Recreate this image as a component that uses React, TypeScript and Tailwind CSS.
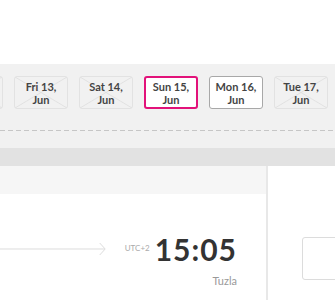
import React from "react";

type Day = { label: string; state: "off" | "on" | "active" };

const days: Day[] = [
  { label: "Fri 13,", state: "off" },
  { label: "Sat 14,", state: "off" },
  { label: "Sun 15,", state: "active" },
  { label: "Mon 16,", state: "on" },
  { label: "Tue 17,", state: "off" },
];

function Cross() {
  return (
    <svg className="absolute inset-0 w-full h-full" preserveAspectRatio="none" viewBox="0 0 54 33">
      <line x1="0" y1="0" x2="54" y2="33" stroke="#e0e0e0" strokeWidth="1" />
      <line x1="54" y1="0" x2="0" y2="33" stroke="#e0e0e0" strokeWidth="1" />
    </svg>
  );
}

function DayButton({ day }: { day: Day }) {
  const base =
    "relative shrink-0 w-[54px] h-[33px] rounded-[3px] flex flex-col items-center justify-center text-[11px] leading-[13px] font-bold text-[#444]";
  const cls =
    day.state === "active"
      ? "bg-white border-2 border-[#e2127a]"
      : day.state === "on"
      ? "bg-white border border-[#a8a8a8]"
      : "bg-[#f1f1f1] border border-[#e2e2e2]";

  return (
    <div className={`${base} ${cls}`}>
      {day.state === "off" && <Cross />}
      <span className="relative">{day.label}</span>
      <span className="relative">Jun</span>
    </div>
  );
}

export default function App() {
  return (
    <div className="w-[335px] h-[300px] overflow-hidden bg-white font-['Lato',sans-serif]">
      <div className="h-[64px] bg-white" />

      {/* date strip */}
      <div className="h-[84px] bg-[#f1f1f1] pt-[12px]">
        <div className="flex gap-[11px] ml-[-51px]">
          {/* previous day, scrolled off */}
          <div className="relative shrink-0 w-[54px] h-[33px] rounded-[3px] bg-[#f1f1f1] border border-[#e2e2e2]">
            <Cross />
          </div>
          {days.map((d) => (
            <DayButton key={d.label} day={d} />
          ))}
        </div>
        <div className="mt-[21px] h-px bg-[repeating-linear-gradient(90deg,#c6c6c6_0_5px,transparent_5px_8px)]" />
      </div>

      <div className="h-[18px] bg-[#e2e2e2]" />

      <div className="flex">
        {/* left card */}
        <div className="shrink-0 w-[268px] h-[134px] border-r-2 border-[#e8e8e8]">
          <div className="h-[28px] bg-[#f6f6f6]" />
          <div className="flex items-center pr-[29px] mt-[40px]">
            <svg className="flex-1 h-[14px]" viewBox="0 0 106 14" preserveAspectRatio="none">
              <line x1="0" y1="7" x2="105" y2="7" stroke="#dcdcdc" strokeWidth="1" />
              <polyline points="100,1 105.5,7 100,13" fill="none" stroke="#dcdcdc" strokeWidth="1" />
            </svg>
            <span className="ml-[19px] text-[8px] text-[#aaa] mt-[-2px]">UTC+2</span>
            <span className="ml-[5px] text-[30px] leading-none font-bold tracking-[1px] text-[#333]">15:05</span>
          </div>
          <div className="pr-[29px] mt-[9px] text-right text-[11px] text-[#999]">Tuzla</div>
        </div>

        {/* right side */}
        <div className="flex-1 pl-[34px] pt-[71px]">
          <div className="h-[43px] w-[60px] rounded-[3px] border border-[#dcdcdc]" />
        </div>
      </div>
    </div>
  );
}
